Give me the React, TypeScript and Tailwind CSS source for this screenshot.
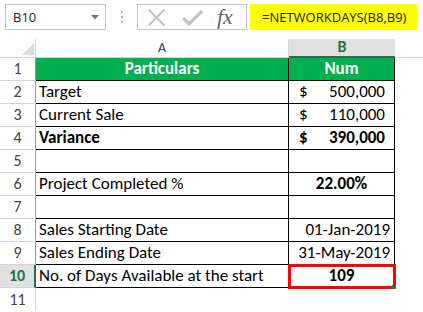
import { FunctionComponent } from "react";

interface RowData {
  n: number;
  a?: string;
  b?: string;
  kind?: "head" | "money" | "center" | "right";
  bold?: boolean;
}

const rows: RowData[] = [
  { n: 1, a: "Particulars", b: "Num", kind: "head" },
  { n: 2, a: "Target", b: "500,000", kind: "money" },
  { n: 3, a: "Current Sale", b: "110,000", kind: "money" },
  { n: 4, a: "Variance", b: "390,000", kind: "money", bold: true },
  { n: 5 },
  { n: 6, a: "Project Completed %", b: "22.00%", kind: "center" },
  { n: 7 },
  { n: 8, a: "Sales Starting Date", b: "01-Jan-2019", kind: "right" },
  { n: 9, a: "Sales Ending Date", b: "31-May-2019", kind: "right" },
  { n: 10, a: "No. of Days Available at the start", b: "109", kind: "center" },
];

const FormulaBar: FunctionComponent = () => {
  return (
    <div className="flex items-start h-[39px] pt-[4px] font-['Open_Sans',sans-serif]">
      <div className="ml-[5px] w-[101px] h-[26px] border border-[#c6c6c6] flex items-center justify-between pl-[7px] pr-[6px]">
        <span className="text-[13px] text-[#222]">B10</span>
        <svg width="8" height="5" viewBox="0 0 8 5">
          <path d="M0 0 L8 0 L4 4.5 Z" fill="#777" />
        </svg>
      </div>
      <div className="w-[31px] h-[26px] flex flex-col items-center justify-center gap-[3px]">
        <div className="w-[2px] h-[2px] bg-[#b5b5b5]" />
        <div className="w-[2px] h-[2px] bg-[#b5b5b5]" />
        <div className="w-[2px] h-[2px] bg-[#b5b5b5]" />
      </div>
      <div className="w-[110px] h-[26px] border border-[#c6c6c6] flex items-center">
        <svg className="ml-[9px]" width="19" height="19" viewBox="0 0 19 19">
          <path d="M1.5 1.5 L17.5 17.5 M17.5 1.5 L1.5 17.5" stroke="#c2c2c2" strokeWidth="2" />
        </svg>
        <svg className="ml-[16px]" width="21" height="17" viewBox="0 0 21 17">
          <path d="M1 9 L7 15 L20 2" stroke="#c2c2c2" strokeWidth="3.2" fill="none" />
        </svg>
        <span className="ml-[14px] text-[22px] italic text-[#666] font-['Liberation_Serif',serif] leading-none">
          fx
        </span>
      </div>
      <div className="ml-[3px] w-[167px] h-[26px] bg-[#ffff00] flex items-center pl-[12px] text-[13px] text-[#222]">
        =NETWORKDAYS(B8,B9)
      </div>
    </div>
  );
};

const HeaderRow: FunctionComponent = () => {
  return (
    <div className="flex h-[19px]">
      <div className="w-[36px] h-full border-r border-b border-[#d4d4d4] relative">
        <svg className="absolute right-[1px] bottom-[2px]" width="12" height="12" viewBox="0 0 12 12">
          <path d="M12 0 L12 12 L0 12 Z" fill="#dcdcdc" />
        </svg>
      </div>
      <div className="w-[253px] h-full border-r border-b border-[#d4d4d4] flex items-end justify-center pb-[2px] text-[14px] text-[#444]">
        A
      </div>
      <div className="w-[106px] h-full bg-[#e1e1e1] border-b-2 border-[#217346] flex items-end justify-center pb-[1px] text-[16px] font-bold text-[#217346]">
        B
      </div>
      <div className="flex-1 h-full border-b border-[#d4d4d4]" />
    </div>
  );
};

const RowHead: FunctionComponent<{ n: number }> = ({ n }) => {
  const selected = n === 10;
  return (
    <div
      className={
        selected
          ? "w-[36px] h-full bg-[#e1e1e1] border-r-2 border-r-[#217346] border-b border-b-[#d4d4d4] flex items-end justify-center pb-[3px] text-[16px] font-bold text-[#217346]"
          : "w-[36px] h-full border-r border-r-[#9a9a9a] border-b border-b-[#d4d4d4] flex items-end justify-center pb-[3px] text-[16px] text-[#444]"
      }
    >
      {n}
    </div>
  );
};

const DataRow: FunctionComponent<{ row: RowData }> = ({ row }) => {
  const head = row.kind === "head";
  const textWeight = row.bold || row.kind === "center" ? "font-bold" : "";
  return (
    <div className="flex h-[23px]">
      <RowHead n={row.n} />
      <div
        className={
          head
            ? "w-[253px] h-full bg-[#00b050] border-r border-b border-black flex items-end justify-center pb-[3px] text-[17px] font-bold text-white"
            : `w-[253px] h-full border-r border-b border-black flex items-end pl-[3px] pb-[3px] text-[17px] text-black ${row.bold ? "font-bold" : ""}`
        }
      >
        {row.a}
      </div>
      <div
        className={
          head
            ? "w-[106px] h-full bg-[#00b050] border-r border-b border-black flex items-end justify-center pb-[3px] text-[17px] font-bold text-white"
            : "w-[106px] h-full border-r border-b border-black relative text-[17px] text-black"
        }
      >
        {head && row.b}
        {row.kind === "money" && (
          <div className={`flex items-end justify-between h-full pl-[10px] pr-[9px] pb-[3px] ${textWeight}`}>
            <span>$</span>
            <span>{row.b}</span>
          </div>
        )}
        {row.kind === "center" && (
          <div className={`flex items-end justify-center h-full pb-[3px] ${textWeight}`}>
            {row.b}
          </div>
        )}
        {row.kind === "right" && (
          <div className="flex items-end justify-end h-full pr-[4px] pb-[3px]">{row.b}</div>
        )}
        {row.n === 10 && (
          <>
            <div className="absolute -left-[1px] -top-[1px] w-[108px] h-[25px] border-[3px] border-[#ff0000]" />
            <div className="absolute -right-[2px] -bottom-[2px] w-[4px] h-[4px] bg-[#217346]" />
          </>
        )}
      </div>
    </div>
  );
};

const App: FunctionComponent = () => {
  return (
    <div className="w-[423px] h-[312px] bg-white overflow-hidden font-['Carlito','Lato',sans-serif] leading-none">
      <FormulaBar />
      <HeaderRow />
      {rows.map((row) => (
        <DataRow key={row.n} row={row} />
      ))}
      <div className="flex h-[23px]">
        <div className="w-[36px] h-full border-r border-[#d4d4d4] flex items-end justify-center pb-[3px] text-[16px] text-[#444]">
          11
        </div>
      </div>
    </div>
  );
};

export default App;
